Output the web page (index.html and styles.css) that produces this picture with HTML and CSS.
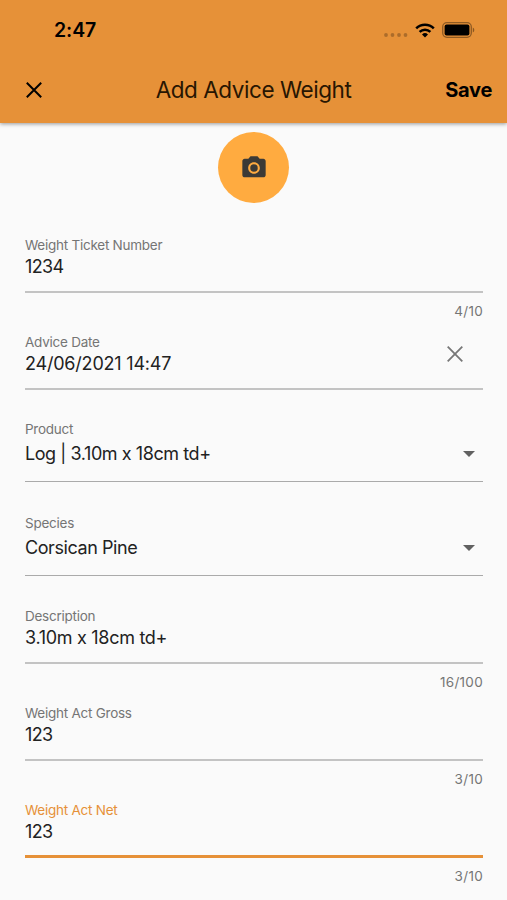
FILE: index.html
```html
<!DOCTYPE html>
<html lang="en">
<head>
    <meta charset="UTF-8">
    <meta name="viewport" content="width=device-width, initial-scale=1.0">
    <title>Add Advice Weight</title>
    <link rel="stylesheet" href="styles.css">
</head>
<body>

    <header class="header">
        <!-- Status bar -->
        <div class="status-bar">
            <span class="time">2:47</span>
            <div class="status-icons">
                <svg class="signal" width="24" height="4" viewBox="0 0 24 4">
                    <circle cx="2" cy="2" r="1.9"/>
                    <circle cx="8.5" cy="2" r="1.9"/>
                    <circle cx="15" cy="2" r="1.9"/>
                    <circle cx="21.5" cy="2" r="1.9"/>
                </svg>
                <svg class="wifi" width="20" height="15" viewBox="0 0 20 15">
                    <path d="M1.2 5.4a12.6 12.6 0 0 1 17.6 0M4.6 8.9a7.8 7.8 0 0 1 10.8 0" fill="none" stroke="#000" stroke-width="2.5"/>
                    <path d="M10 14.5l-3-3a4.4 4.4 0 0 1 6 0z"/>
                </svg>
                <svg class="battery" width="33" height="16" viewBox="0 0 33 16">
                    <rect x=".7" y=".7" width="28.6" height="14.6" rx="4.2" fill="none" stroke="#000" stroke-opacity=".38" stroke-width="1.3"/>
                    <rect x="2.6" y="2.6" width="24.8" height="10.8" rx="2"/>
                    <path d="M30.8 5.5c2 1 2 4 0 5z" fill-opacity=".4"/>
                </svg>
            </div>
        </div>

        <!-- Title bar -->
        <div class="title-bar">
            <button class="close" type="button" aria-label="Close">
                <svg width="16" height="16" viewBox="0 0 16 16"><path d="M.8.8l14.4 14.4M15.2.8L.8 15.2"/></svg>
            </button>
            <h1>Add Advice Weight</h1>
            <button class="save" type="button">Save</button>
        </div>
    </header>

    <main>
        <button class="camera" type="button" aria-label="Take photo">
            <svg width="28" height="28" viewBox="0 0 24 24">
                <circle cx="12" cy="12" r="3.2"/>
                <path d="M9 2L7.17 4H4c-1.1 0-2 .9-2 2v12c0 1.1.9 2 2 2h16c1.1 0 2-.9 2-2V6c0-1.1-.9-2-2-2h-3.17L15 2H9zm3 15c-2.76 0-5-2.24-5-5s2.24-5 5-5 5 2.24 5 5-2.24 5-5 5z"/>
            </svg>
        </button>

        <form class="form">
            <div class="field">
                <span class="label">Weight Ticket Number</span>
                <span class="value number">1234</span>
            </div>
            <div class="counter">4/10</div>

            <div class="field with-icon">
                <div>
                    <span class="label">Advice Date</span>
                    <span class="value date">24/06/2021 14:47</span>
                </div>
                <svg class="clear" width="16" height="16" viewBox="0 0 16 16"><path d="M.7.7l14.6 14.6M15.3.7L.7 15.3"/></svg>
            </div>

            <div class="field select">
                <span class="label">Product</span>
                <span class="value">Log | 3.10m x 18cm td+ <i class="arrow"></i></span>
            </div>

            <div class="field select">
                <span class="label">Species</span>
                <span class="value">Corsican Pine <i class="arrow"></i></span>
            </div>

            <div class="field">
                <span class="label">Description</span>
                <span class="value description">3.10m x 18cm td+</span>
            </div>
            <div class="counter">16/100</div>

            <div class="field">
                <span class="label">Weight Act Gross</span>
                <span class="value number">123</span>
            </div>
            <div class="counter">3/10</div>

            <div class="field active">
                <span class="label">Weight Act Net</span>
                <span class="value number">123</span>
            </div>
            <div class="counter">3/10</div>
        </form>
    </main>

</body>
</html>
```
FILE: styles.css
```css
* {
    box-sizing: border-box;
}

body {
    margin: 0;
    height: 900px;
    overflow: hidden;
    font-family: Inter, Roboto, sans-serif;
    background-color: #fafafa;
    color: #222;
}

svg {
    display: block;
}

button {
    padding: 0;
    border: none;
    background: none;
    font-family: inherit;
}

.header {
    height: 123px;
    background-color: #e69138;
    box-shadow: 0 1px 4px rgba(0, 0, 0, 0.4);
    color: #000;
}

.status-bar {
    display: flex;
    justify-content: space-between;
    height: 60px;
    padding: 0 32px 0 54px;
    align-items: center;
}

.time {
    font-size: 19.5px;
    font-weight: 600;
    letter-spacing: -0.1px;
}

.status-icons {
    display: flex;
    align-items: center;
}

.signal {
    margin: 10px 7px 0 0;
    fill: rgba(0, 0, 0, 0.25);
}

.wifi {
    margin-right: 7px;
}

.title-bar {
    display: grid;
    grid-template-columns: 80px 1fr 80px;
    align-items: center;
    height: 60px;
    padding: 0 15px 0 26px;
}

.close path {
    stroke: #000;
    stroke-width: 2;
}

h1 {
    margin: -2px 0 0 -11px;
    font-size: 22.5px;
    font-weight: 400;
    letter-spacing: -0.45px;
    text-align: center;
    white-space: nowrap;
    color: #281602;
}

.save {
    font-size: 20px;
    font-weight: 700;
    letter-spacing: -0.3px;
    text-align: right;
}

.camera {
    display: flex;
    align-items: center;
    justify-content: center;
    width: 71px;
    height: 71px;
    margin: 9px auto 33px;
    border-radius: 50%;
    background-color: #ffab40;
}

.camera svg {
    fill: #3c3a36;
}

.form {
    width: 458px;
    margin-left: 25px;
}

.field {
    height: 57px;
    border-bottom: 2px solid #c3c3c3;
}

.label {
    display: block;
    font-size: 13.5px;
    line-height: 18px;
    letter-spacing: -0.25px;
    color: #757575;
}

.value {
    display: flex;
    align-items: center;
    justify-content: space-between;
    font-size: 18px;
    line-height: 26px;
    letter-spacing: -0.43px;
}

.number {
    letter-spacing: -0.6px;
}

.date {
    letter-spacing: -0.2px;
}

.description {
    letter-spacing: -0.3px;
}

.counter {
    margin: 9px 0 13px;
    font-size: 13.5px;
    line-height: 18px;
    letter-spacing: 0.3px;
    text-align: right;
    color: #757575;
}

.with-icon {
    display: flex;
    justify-content: space-between;
    margin-bottom: 30px;
}

.clear {
    margin: 13px 20px 0 0;
}

.clear path {
    stroke: #777;
    stroke-width: 1.8;
}

.select {
    height: 62px;
    margin-bottom: 32px;
    border-bottom: 1px solid #aaa;
}

.select + .select {
    margin-bottom: 31px;
}

.select .value {
    padding-top: 3px;
}

.arrow {
    margin-right: 8px;
    border: 6px solid transparent;
    border-top-color: #616161;
    border-bottom: none;
}

.active {
    border-bottom: 3px solid #e69138;
}

.active .label {
    color: #e69138;
}
```
